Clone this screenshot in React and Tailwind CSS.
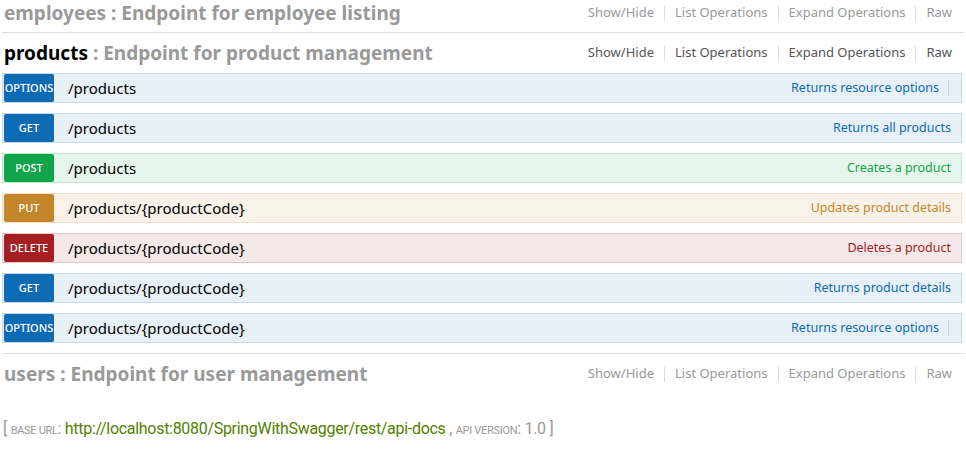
const ops = [
  { m: "OPTIONS", p: "/products", s: "Returns resource options", c: "blue", bar: true },
  { m: "GET", p: "/products", s: "Returns all products", c: "blue" },
  { m: "POST", p: "/products", s: "Creates a product", c: "green" },
  { m: "PUT", p: "/products/{productCode}", s: "Updates product details", c: "orange" },
  { m: "DELETE", p: "/products/{productCode}", s: "Deletes a product", c: "red" },
  { m: "GET", p: "/products/{productCode}", s: "Returns product details", c: "blue" },
  { m: "OPTIONS", p: "/products/{productCode}", s: "Returns resource options", c: "blue", bar: true },
];
const styles = {
  blue: { row: "bg-[#e7f0f7] border-[#c3d9ec]", badge: "bg-[#0f6ab4]", text: "text-[#0f6ab4]" },
  green: { row: "bg-[#e7f6ec] border-[#c3e8d1]", badge: "bg-[#10a54a]", text: "text-[#10a54a]" },
  orange: { row: "bg-[#f9f2e9] border-[#f0e0ca]", badge: "bg-[#c5862b]", text: "text-[#c5862b]" },
  red: { row: "bg-[#f5e8e8] border-[#e8c6c7]", badge: "bg-[#a41e22]", text: "text-[#a41e22]" },
};
function Links({ dark }) {
  const c = dark ? "text-[#555]" : "text-[#999]";
  const items = ["Show/Hide", "List Operations", "Expand Operations", "Raw"];
  return (
    <div className={`flex items-center text-[13px] ${c}`}>
      {items.map((t, i) => (
        <span key={t} className="flex items-center">
          {i > 0 && <span className="mx-[10px] h-[16px] w-px bg-[#ddd]" />}
          {t}
        </span>
      ))}
    </div>
  );
}
function Heading({ name, desc, active }) {
  return (
    <div className="flex items-center justify-between h-[30px] pl-[4px] pr-[14px]">
      <div className="text-[19px] font-bold text-[#999]">
        <span className={active ? "text-black" : ""}>{name}</span> : {desc}
      </div>
      <Links dark={active} />
    </div>
  );
}
export default function App() {
  return (
    <div className="w-[966px] h-[449px] bg-white overflow-hidden" style={{ fontFamily: '"Noto Sans", "Open Sans", sans-serif' }}>
      <div className="mt-[-2px]">
        <Heading name="employees" desc="Endpoint for employee listing" />
      </div>
      <div className="border-t border-[#ddd] mx-[2px] mt-[4px]" />
      <div className="mt-[5px]">
        <Heading name="products" desc="Endpoint for product management" active />
      </div>
      <div className="flex flex-col gap-[10px] mt-[5px] pl-[2px] pr-[4px]">
        {ops.map((o, i) => {
          const st = styles[o.c];
          return (
            <div key={i} className={`flex items-center h-[30px] border ${st.row}`}>
              <div className={`${st.badge} text-white text-[11px] w-[50px] h-[28px] flex items-center justify-center rounded-[2px] ml-[1px] font-medium`}>
                {o.m}
              </div>
              <div className="ml-[14px] text-[15px] text-black flex-1">{o.p}</div>
              <div className={`text-[12.5px] ${st.text} pr-[10px] flex items-center`}>
                {o.s}
                {o.bar && <span className="ml-[9px] mr-[2px] h-[16px] w-px bg-[#c3d9ec]" />}
              </div>
            </div>
          );
        })}
      </div>
      <div className="border-t border-[#ddd] mx-[2px] mt-[10px]" />
      <div className="mt-[5px]">
        <Heading name="users" desc="Endpoint for user management" />
      </div>
      <div className="mt-[28px] pl-[3px] text-[#999] text-[16px]" style={{ fontFamily: 'Roboto, sans-serif', letterSpacing: "-0.3px" }}>
        [ <span className="text-[11px] uppercase">Base URL</span>: <span className="text-[#547f00]">http://localhost:8080/SpringWithSwagger/rest/api-docs</span> , <span className="text-[11px] uppercase">API Version</span>: 1.0 ]
      </div>
    </div>
  );
}
